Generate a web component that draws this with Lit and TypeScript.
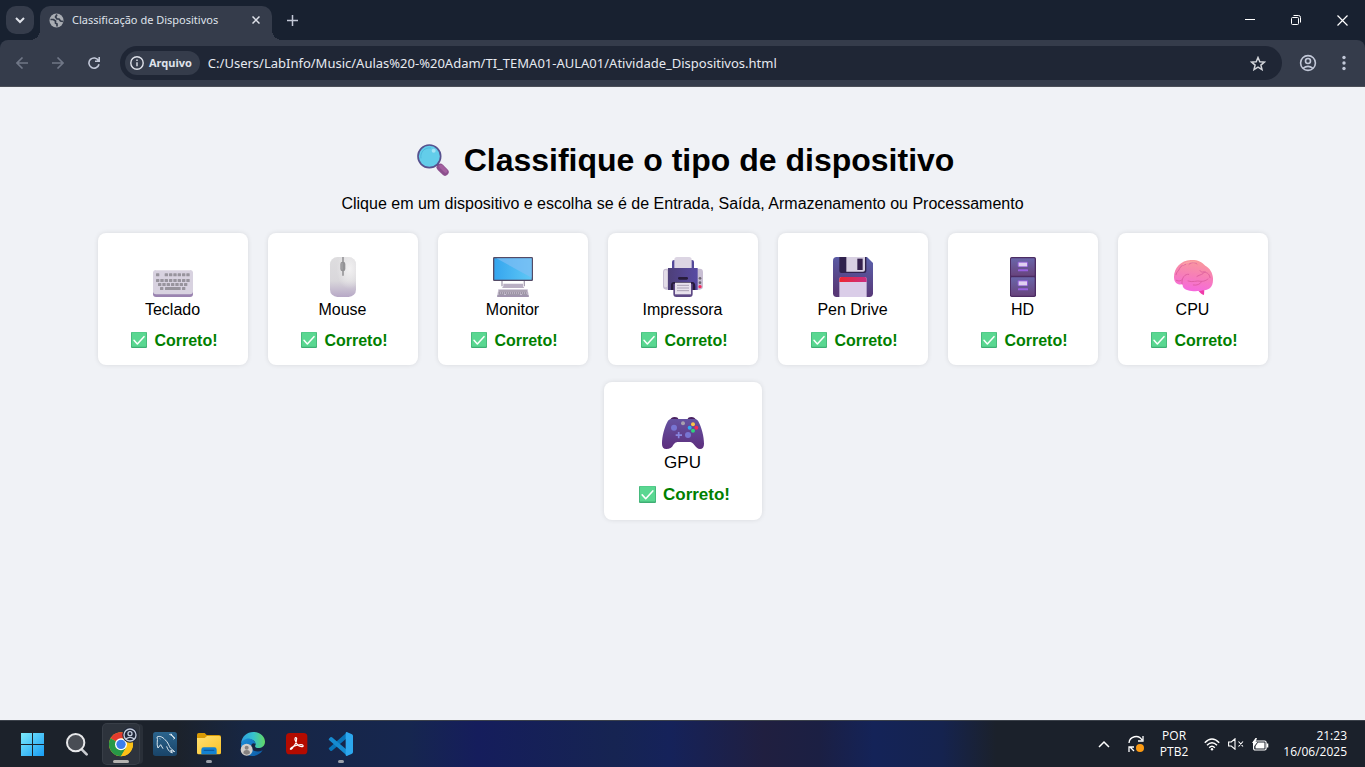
import { LitElement, html, svg, css } from "lit";
import { customElement, property } from "lit/decorators.js";

type Device = { name: string; icon: string; active?: boolean };

const devices: Device[] = [
  { name: "Teclado", icon: "keyboard" },
  { name: "Mouse", icon: "mouse" },
  { name: "Monitor", icon: "monitor" },
  { name: "Impressora", icon: "printer" },
  { name: "Pen Drive", icon: "floppy" },
  { name: "HD", icon: "cabinet" },
  { name: "CPU", icon: "brain" },
  { name: "GPU", icon: "gamepad", active: true },
];

const key = (x: number, y: number, w = 10) =>
  svg`<rect x=${x} y=${y} width=${w} height="9" rx="1.5" fill="#98949d" />`;
const keys = (from: number, count: number, y: number) =>
  Array.from({ length: count }, (_, i) => key(from + i * 13, y));

const drawings: Record<string, unknown> = {
  keyboard: svg`
    <rect x="0" y="44" width="120" height="76" rx="9" fill="#9a83b0" />
    <rect x="0" y="39" width="120" height="73" rx="9" fill="#d8d2e0" />
    <path d="M9 40.500h102" stroke="#e8e4ec" stroke-width="2" />
    ${key(9, 49)}${keys(35, 6, 49)}${keys(9, 8, 66)}${keys(15, 7, 78)}
    ${key(21, 90)}${key(36, 90, 47)}${key(87, 90)}`,
  mouse: svg`
    <defs>
      <linearGradient id="m" x1="0" y1="0" x2="0" y2="1">
        <stop offset="0" stop-color="#dedddf" /><stop offset=".6" stop-color="#d9d7db" />
        <stop offset="1" stop-color="#b7a8c6" />
      </linearGradient>
      <radialGradient id="mh" cx=".75" cy=".3" r=".5">
        <stop offset="0" stop-color="#f2f1f2" /><stop offset="1" stop-color="#f2f1f2" stop-opacity="0" />
      </radialGradient>
    </defs>
    <rect x="21" y="0" width="78" height="120" rx="22" fill="url(#m)" />
    <rect x="21" y="0" width="78" height="120" rx="22" fill="url(#mh)" />
    <path d="M60 0v56" stroke="#98979a" stroke-width="5" />
    <rect x="52" y="14" width="15" height="29" rx="7" fill="#939295" />
    <path d="M57 18v20" stroke="#aaa9ac" stroke-width="3" />`,
  monitor: svg`
    <defs>
      <linearGradient id="s" x1="0" y1="0" x2="1" y2="0">
        <stop offset="0" stop-color="#35a5ee" /><stop offset="1" stop-color="#5fc8f6" />
      </linearGradient>
    </defs>
    <path d="M27 70v18M94 70v18" stroke="#aaa1b3" stroke-width="4" />
    <path d="M31 80h59v8l4 5H27l4-5z" fill="#b9afc3" />
    <rect x="0" y="0" width="120" height="72" rx="4" fill="#544b66" />
    <rect x="4" y="4" width="112" height="64" fill="url(#s)" />
    <path d="M10 4h106v58z" fill="#7fbef4" opacity=".7" />
    <path d="M16 97h88l4 23H12z" fill="#c7bed0" />
    <path d="M13 117h94" stroke="#8f809e" stroke-width="4" />
    <path d="M19 102h82M17 108h86" stroke="#8e8795" stroke-width="4" stroke-dasharray="4 2" />
    <path d="M17 113h16m6 0h42m6 0h16" stroke="#9b93a3" stroke-width="3" />`,
  printer: svg`
    <defs>
      <linearGradient id="p" x1="0" y1="0" x2="1" y2="0">
        <stop offset="0" stop-color="#4d3f78" /><stop offset="1" stop-color="#584aa3" />
      </linearGradient>
    </defs>
    <path d="M27 36V15q0-6 6-6h54q6 0 6 6v21z" fill="#54499a" />
    <path d="M34 38V8q0-8 8-8h36q8 0 8 8v30z" fill="#dcd5e3" />
    <rect x="0" y="35" width="120" height="63" rx="10" fill="#c8bed3" />
    <rect x="3" y="39" width="10" height="52" rx="5" fill="#e3dde8" />
    <path d="M15 33h89v66H15z" fill="url(#p)" />
    <rect x="45" y="60" width="30" height="8" rx="4" fill="#281c3c" />
    <path d="M24 84q0-9 9-9h55q9 0 9 14v10H24z" fill="#261a3c" />
    <path d="M31 80h58v31q0 9-9 9H40q-9 0-9-9z" fill="#5e4985" />
    <path d="M36 77h48v35H36z" fill="#e8e2ed" />
    <path d="M42 85h36M42 93h36M42 101h36" stroke="#aaa1b5" stroke-width="3" />
    <circle cx="111" cy="64" r="4" fill="#6d6571" /><circle cx="111" cy="77" r="4" fill="#6d6571" />
    <circle cx="111" cy="89" r="5" fill="#f52b5e" />`,
  floppy: svg`
    <defs>
      <linearGradient id="f" x1="1" y1="0" x2=".8" y2="1">
        <stop offset="0" stop-color="#5b62ad" /><stop offset="1" stop-color="#573776" />
      </linearGradient>
      <linearGradient id="fr"><stop offset="0" stop-color="#ee2630" /><stop offset="1" stop-color="#c93083" /></linearGradient>
    </defs>
    <path d="M11 0h91l18 18v91q0 11-11 11H11q-11 0-11-11V11Q0 0 11 0z" fill="url(#f)" />
    <path d="M19 0h81v42q0 6-6 6H25q-6 0-6-6z" fill="#30224d" />
    <path d="M40 0h56v38q0 6-6 6H40z" fill="#d8d0e2" />
    <rect x="73" y="5" width="16" height="34" fill="#35214e" />
    <path d="M19 66q0-6 6-6h70q6 0 6 6v54H19z" fill="#dacde8" />
    <path d="M19 75v-9q0-6 6-6h70q6 0 6 6v9z" fill="url(#fr)" />`,
  cabinet: svg`
    <defs>
      <linearGradient id="c" x1="0" y1="0" x2="0" y2="1">
        <stop offset="0" stop-color="#6a66a9" /><stop offset="1" stop-color="#68447d" />
      </linearGradient>
    </defs>
    <rect x="21" y="0" width="78" height="120" rx="5" fill="#4c2c63" />
    <rect x="24" y="4" width="71" height="52" rx="2" fill="url(#c)" />
    <rect x="24" y="61" width="71" height="55" rx="2" fill="url(#c)" />
    <rect x="44" y="14" width="31" height="16" rx="3" fill="#9260d7" />
    <rect x="47" y="17" width="25" height="11" fill="#e0d0f0" />
    <rect x="45" y="37" width="30" height="6" rx="1" fill="#9861e0" />
    <rect x="44" y="70" width="31" height="17" rx="3" fill="#9260d7" />
    <rect x="47" y="73" width="25" height="12" fill="#e0d0f0" />
    <rect x="45" y="94" width="30" height="6" rx="1" fill="#9861e0" />`,
  brain: svg`
    <defs>
      <linearGradient id="b" x1=".6" y1="0" x2=".4" y2="1">
        <stop offset="0" stop-color="#f99a9b" /><stop offset=".5" stop-color="#f77fb7" />
        <stop offset="1" stop-color="#f668df" />
      </linearGradient>
    </defs>
    <path d="M74 98q12-3 20 2l-1 14q-9-2-19-16z" fill="#f03ba9" />
    <path d="M3 62C2 34 23 10 53 9c20-1 33 5 44 17 15 8 24 25 23 43 0 22-13 31-31 31-15 5-52 4-59-10-1-3 0-6-3-8C13 84 4 77 3 62z" fill="url(#b)" />
    <g fill="none" stroke="#d9579b" stroke-width="3" stroke-linecap="round" opacity=".75">
      <path d="M9 53c2-10 8-10 11-19s14-10 18-12M48 22c8-9 21-5 24-1M72 58c10-6 17-4 24-14M93 45c13 2 17 9 18 17M81 41c4 7 11 4 11 4" />
      <path d="M27 81c-2-19 9-31 20-29M45 72c13 6 26-3 39 1 12 1 21-7 21-7M61 84c11 2 20-2 25-10M10 70c8 4 14 2 18-3" />
    </g>
    <path d="M29 24c12-11 27-9 39-9" fill="none" stroke="#fcb3ad" stroke-width="3" opacity=".7" />`,
  gamepad: svg`
    <defs>
      <linearGradient id="g" x1="0" y1="0" x2="0" y2="1">
        <stop offset="0" stop-color="#6553a1" /><stop offset="1" stop-color="#5d2e7d" />
      </linearGradient>
    </defs>
    <path d="M23 42q3-12 15-12 10 0 11 6h28q1-6 11-6 12 0 15 12z" fill="#492060" />
    <path d="M18 41q3-5 11-5h68q8 0 11 5c11 20 18 46 18 70 0 9-4 15-12 15-7 0-12-5-17-12-5-8-10-9-17-9H46q-7 0-12 8-6 13-21 13-13 0-13-15C0 87 7 61 18 41z" fill="url(#g)" />
    <circle cx="36" cy="62" r="9" fill="#7775d2" /><circle cx="78" cy="84" r="9" fill="#7775d2" />
    <path d="M50 75v19M41 84.500h19" stroke="#8785df" stroke-width="5" />
    <circle cx="63" cy="49" r="6" fill="#a89fae" />
    <circle cx="93" cy="52" r="6" fill="#fac348" /><circle cx="83" cy="62" r="6" fill="#2fa9f5" />
    <circle cx="103" cy="62" r="6" fill="#f42b55" /><circle cx="93" cy="71" r="6" fill="#2ed27d" />`,
};

const check = svg`
  <rect width="48" height="48" rx="3" fill="#3fae74" />
  <rect x="2" y="1" width="44" height="43" rx="2" fill="#5ad791" />
  <path d="M9 25l10 11 20-22" fill="none" stroke="#fff" stroke-width="4.500" stroke-linecap="round" stroke-linejoin="round" />`;

@customElement("device-card")
export class DeviceCard extends LitElement {
  @property() name = "";
  @property() icon = "";
  @property({ type: Boolean, reflect: true }) active = false;

  static styles = css`
    :host { display: block; width: 150px; }
    :host([active]) { width: 158px; margin: -3px -4px; }
    .card {
      display: flex; flex-direction: column; align-items: center;
      width: 100%; box-sizing: border-box; padding: 24px 16px 14px;
      border: 0; border-radius: 8px; background: #fff; color: #000;
      box-shadow: 0 0 5px rgba(0, 0, 0, 0.1);
      font: 16px/20px "Liberation Sans", Arial, sans-serif; cursor: pointer;
    }
    .icon { width: 40px; height: 40px; margin-bottom: 3px; }
    .result { display: flex; align-items: center; gap: 7px; margin-top: 11px; padding-left: 4px; color: green; font-weight: bold; }
    .check { width: 16px; height: 16px; margin-bottom: 2px; }
    .active { padding: 25px 16px 15px; font-size: 17px; }
    .active .icon { width: 42px; height: 42px; margin-bottom: 4px; }
    .active .result { margin-top: 12px; }
    .active .check { width: 17px; height: 17px; }
  `;

  render() {
    return html`<button class="card ${this.active ? "active" : ""}">
      <svg class="icon" viewBox=${this.active ? "0 0 126 126" : "0 0 120 120"} aria-hidden="true">${drawings[this.icon]}</svg>
      <span>${this.name}</span>
      <span class="result"><svg class="check" viewBox="0 0 48 48" aria-hidden="true">${check}</svg>Correto!</span>
    </button>`;
  }
}

@customElement("browser-chrome")
export class BrowserChrome extends LitElement {
  static styles = css`
    :host { display: block; background: #182130; color: #dfe2ea; font: 12px/16px "Noto Sans", "Open Sans", sans-serif; }
    button { display: grid; place-items: center; border: 0; padding: 0; background: none; color: inherit; font: inherit; }
    svg { display: block; fill: none; stroke: currentColor; }
    .tabs { display: flex; align-items: flex-end; height: 40px; padding-left: 6px; }
    .list { width: 28px; height: 28px; margin: 0 6px 6px 0; border-radius: 10px; background: #353c4b; }
    .tab {
      position: relative; display: flex; align-items: center; gap: 8px; box-sizing: border-box;
      width: 232px; height: 34px; padding: 0 8px 6px 9px; border-radius: 10px 10px 0 0; background: #353c4b;
    }
    .tab::before, .tab::after { content: ""; position: absolute; bottom: 0; width: 10px; height: 10px; }
    .tab::before { right: 100%; background: radial-gradient(circle at 0 0, transparent 10px, #353c4b 10px); }
    .tab::after { left: 100%; background: radial-gradient(circle at 100% 0, transparent 10px, #353c4b 10px); }
    .title { flex: 1; font-size: 11px; white-space: nowrap; }
    .close { width: 16px; height: 16px; }
    .new { width: 28px; height: 28px; margin: 0 auto 6px 6px; color: #c2c8d6; }
    .window { width: 46px; height: 40px; color: #fff; }
    .toolbar {
      display: flex; align-items: center; box-sizing: border-box; height: 47px; padding: 0 3px 0 4px;
      border-bottom: 1px solid #4b4f58; border-radius: 8px 8px 0 0; background: #353c4b;
    }
    .tool { width: 36px; height: 34px; color: #c2c8d8; }
    .muted { color: #707787; }
    .address {
      flex: 1; display: flex; align-items: center; height: 34px; margin: 0 8px; padding-left: 5px; box-sizing: border-box;
      border-radius: 17px; background: #1f2635;
    }
    .chip { display: flex; align-items: center; gap: 5px; height: 24px; padding: 0 8px 0 5px; border-radius: 12px; background: #353c4b; font-size: 11px; font-weight: 700; }
    .url { flex: 1; min-width: 0; padding: 0 8px; border: 0; outline: 0; background: none; color: #e6e9f0; font: 13px/20px "Noto Sans", "Open Sans", sans-serif; }
    .star { width: 34px; height: 34px; margin-right: 7px; color: #d3d5da; }
  `;

  render() {
    return html`
      <div class="tabs">
        <button class="list" aria-label="Pesquisar guias"><svg width="10" height="8" stroke-width="2" viewBox="0 0 10 8"><path d="M1 2l4 4 4-4" /></svg></button>
        <div class="tab">
          <svg width="15" height="15" viewBox="0 0 15 15"><circle cx="7.500" cy="7.500" r="7" fill="#a9adb3" stroke="none" /><path d="M1.500 6.500h3l2 1.500v2l1.500 1v2.500M8 1.500L6.500 4l1.500 2h2l1.500 2 2.500.5" stroke="#353c4b" stroke-width="1.700" /></svg>
          <span class="title">Classificação de Dispositivos</span>
          <button class="close" aria-label="Fechar guia"><svg width="8" height="8" viewBox="0 0 8 8" stroke-width="1.500"><path d="M.5.5l7 7M7.500.5l-7 7" /></svg></button>
        </div>
        <button class="new" aria-label="Nova guia"><svg width="11" height="11" viewBox="0 0 11 11" stroke-width="1.500"><path d="M5.500 0v11M0 5.500h11" /></svg></button>
        <button class="window" aria-label="Minimizar"><svg width="10" height="10" viewBox="0 0 10 10"><path d="M0 4.500h10" /></svg></button>
        <button class="window" aria-label="Restaurar"><svg width="10" height="10" viewBox="0 0 10 10"><rect x=".5" y="2.500" width="7" height="7" rx="1" /><path d="M2.500.5h5q2 0 2 2v5" /></svg></button>
        <button class="window" aria-label="Fechar"><svg width="11" height="11" viewBox="0 0 11 11" stroke-width="1.200"><path d="M.5.5l10 10M10.500.5l-10 10" /></svg></button>
      </div>
      <div class="toolbar">
        <button class="tool muted" aria-label="Voltar"><svg width="12" height="12" viewBox="0 0 12 12" stroke-width="1.600"><path d="M12 6H1M6.500.5L1 6l5.500 5.500" /></svg></button>
        <button class="tool muted" aria-label="Avançar"><svg width="12" height="12" viewBox="0 0 12 12" stroke-width="1.600"><path d="M0 6h11M5.500.5L11 6l-5.500 5.500" /></svg></button>
        <button class="tool" aria-label="Recarregar"><svg width="12" height="12" viewBox="0 0 12 12" stroke-width="1.600"><path d="M11 7.200A5.100 5.100 0 1 1 10.500 3.600M11.200 0v4.200H7" /></svg></button>
        <div class="address">
          <button class="chip"><svg width="14" height="14" viewBox="0 0 14 14" stroke-width="1.400"><circle cx="7" cy="7" r="6.200" /><path d="M7 6.200v4M7 3.500v1.500" /></svg>Arquivo</button>
          <input class="url" aria-label="Endereço" value="C:/Users/LabInfo/Music/Aulas%20-%20Adam/TI_TEMA01-AULA01/Atividade_Dispositivos.html" />
          <button class="star" aria-label="Favoritar"><svg width="16" height="15" viewBox="0 0 16 15" stroke-width="1.500"><path d="M8 1.500l1.800 4.200 4.600.4-3.500 3 1.100 4.500L8 11.200l-4 2.400 1.100-4.500-3.500-3 4.600-.4z" /></svg></button>
        </div>
        <button class="tool" aria-label="Perfil"><svg width="18" height="18" viewBox="0 0 18 18" stroke-width="1.600"><circle cx="9" cy="9" r="7.400" /><circle cx="9" cy="7" r="2.500" /><path d="M4 14.300q5-3.800 10 0" /></svg></button>
        <button class="tool" aria-label="Menu"><svg width="4" height="16" viewBox="0 0 4 16"><g fill="currentColor" stroke="none"><circle cx="2" cy="2.500" r="1.700" /><circle cx="2" cy="8" r="1.700" /><circle cx="2" cy="13.500" r="1.700" /></g></svg></button>
      </div>`;
  }
}

const apps = [
  { name: "Iniciar", state: "", art: svg`
    <defs><linearGradient id="w" x1="0" y1="0" x2="72" y2="72" gradientUnits="userSpaceOnUse"><stop offset="0" stop-color="#7eebfb" /><stop offset="1" stop-color="#159bf5" /></linearGradient></defs>
    <path d="M0 3h33v33H0zM36 3h33v33H36zM0 39h33v33H0zM36 39h33v33H36z" fill="url(#w)" />` },
  { name: "Pesquisar", state: "", art: svg`
    <path d="M50 52l15 15" stroke="#c9ccd0" stroke-width="8" stroke-linecap="round" />
    <circle cx="32" cy="32" r="26" fill="#494d54" stroke="#e7e8ea" stroke-width="6" />` },
  { name: "Google Chrome", state: "current", art: svg`
    <circle cx="36" cy="37" r="36" fill="#fbc116" />
    <path d="M36 37L4.800 19A36 36 0 0 1 67.200 19z" fill="#e33b2e" />
    <path d="M36 37L4.800 19A36 36 0 0 0 36 73l16-27z" fill="#279847" />
    <path d="M36 19h31.200A36 36 0 0 1 36 73l16-27z" fill="#fbc116" />
    <circle cx="36" cy="37" r="18" fill="#fff" /><circle cx="36" cy="37" r="14" fill="#3b7ded" />
    <circle cx="63" cy="9" r="23" fill="#20283a" />
    <g fill="none" stroke="#c5cede" stroke-width="4"><circle cx="63" cy="9" r="18" /><circle cx="63" cy="5" r="6" /><path d="M50 21q13-10 26 0" /></g>` },
  { name: "MySQL Workbench", state: "", art: svg`
    <defs><linearGradient id="q" x1="0" y1="0" x2="0" y2="1"><stop offset="0" stop-color="#2b648d" /><stop offset="1" stop-color="#194468" /></linearGradient></defs>
    <rect width="72" height="72" rx="8" fill="url(#q)" />
    <path d="M15 48C9 35 16 25 12 15c7-4 16-1 24 8 10 8 12 20 16 25l13 11-12-4 5 8c-11-4-15-13-17-20M15 48l8-10 7 12M20 20l2 1" fill="none" stroke="#d9e5ed" stroke-width="3" stroke-linejoin="round" />
    <path d="M49 7l8 3 8 8-3 4M54 5l5 9 6 5" fill="none" stroke="#e8f0f5" stroke-width="3" />` },
  { name: "Explorador de Arquivos", state: "open", art: svg`
    <defs><linearGradient id="e" x1="0" y1="0" x2="1" y2="1"><stop offset="0" stop-color="#ffe073" /><stop offset="1" stop-color="#fbc226" /></linearGradient></defs>
    <path d="M0 8q0-5 5-5h18l6 6h37q6 0 6 6v8H0z" fill="#d99a04" />
    <path d="M0 18h23l7-6h37q5 0 5 5v45q0 5-5 5H5q-5 0-5-5z" fill="url(#e)" />
    <path d="M13 67V53q0-7 7-7h32q7 0 7 7v14z" fill="#1382d2" /><path d="M22 55h28" stroke="#0b5aa0" stroke-width="4" stroke-linecap="round" />` },
  { name: "Microsoft Edge", state: "", art: svg`
    <defs>
      <linearGradient id="eg"><stop offset="0" stop-color="#2e9dde" /><stop offset=".5" stop-color="#35c1cf" /><stop offset="1" stop-color="#62d864" /></linearGradient>
      <linearGradient id="eb" x1="0" y1="0" x2="1" y2="1"><stop offset="0" stop-color="#1a8fdb" /><stop offset="1" stop-color="#0c59a4" /></linearGradient>
    </defs>
    <path d="M0 34C3 12 18 0 37 0c22 0 35 15 35 29 0 13-10 19-20 19-9 0-12-4-8-10C43 20 19 17 0 34z" fill="url(#eg)" />
    <path d="M0 38C2 25 15 18 27 20c10 2 17 9 16 17-4-6-12-3-13 6-1 12 17 21 35 12C58 66 46 72 34 72 15 72-1 57 0 38z" fill="url(#eb)" />
    <circle cx="17" cy="53" r="18" fill="#d0cdca" /><circle cx="17" cy="47" r="6" fill="#85817f" /><path d="M7 64q0-10 10-10t10 10q-10 8-20 0z" fill="#85817f" />` },
  { name: "Adobe Acrobat", state: "", art: svg`
    <rect x="3" y="3" width="64" height="64" rx="11" fill="#b30b00" />
    <path d="M18 48c8-1 17-14 17-29-4-5-7 0-4 7 4 12 11 19 21 18 5-1 2-6-4-6-13 0-32 8-32 13 0 2 4 1 8-5" fill="none" stroke="#fff" stroke-width="3.500" />` },
  { name: "Visual Studio Code", state: "open", art: svg`
    <path d="M55 0v17L9 56q-3 2-5 0l-4-4q-2-2 0-4z" fill="#0874b9" />
    <path d="M0 24q-2-2 0-4l4-4q2-2 5 0l46 39v17z" fill="#168bd0" />
    <path d="M53 0l16 7q3 2 3 5v48q0 3-3 5l-16 7q-3 0-3-4V4q0-4 3-4z" fill="#2ca7ee" />` },
];

@customElement("task-bar")
export class TaskBar extends LitElement {
  static styles = css`
    :host {
      display: flex; align-items: stretch; justify-content: space-between; box-sizing: border-box; height: 47px;
      padding: 0 18px 0 11px; border-top: 1px solid #3c424b; color: #fff; font: 12px/16px "Open Sans", "Noto Sans", sans-serif;
      background: linear-gradient(90deg, #1c222b 13%, #172643 18%, #16264f 30%, #151d5c 35%, #162452 45%, #15225a 49%, #201f40 56%, #1b1f43 60%, #142358 64%, #15234f 69%, #1b212b 73%);
    }
    button { border: 0; padding: 0; background: none; color: inherit; font: inherit; }
    .apps, .tray { display: flex; align-items: center; }
    .app { display: flex; flex-direction: column; align-items: center; justify-content: flex-end; width: 36px; height: 40px; margin: 0 4px; border-radius: 4px; }
    .app svg { display: block; width: 24px; height: 24px; overflow: visible; }
    .mark { width: 6px; height: 3px; margin: 4px 0 1px; border-radius: 2px; }
    .open .mark { background: #9aa0aa; }
    .current { background: #2d333c; box-shadow: 0 0 0 1px #383e47, 4px 0 0 #292f38; }
    .current .mark { width: 16px; background: #b5b3b0; }
    .tray svg { display: block; fill: none; stroke: #fff; }
    .chevron { margin-right: 18px; }
    .sync, .lang { margin-right: 16px; }
    .lang { text-align: center; }
    .status { display: flex; align-items: center; gap: 8px; margin-right: 14px; }
    .clock { text-align: right; }
  `;

  render() {
    return html`
      <div class="apps">${apps.map((a) => html`<button class="app ${a.state}" aria-label=${a.name}>
        <svg viewBox="0 0 72 72">${a.art}</svg><span class="mark"></span></button>`)}</div>
      <div class="tray">
        <button class="chevron" aria-label="Mostrar ícones ocultos"><svg width="12" height="8" viewBox="0 0 12 8" stroke-width="1.500"><path d="M1 7l5-5 5 5" /></svg></button>
        <button class="sync" aria-label="Atualização"><svg width="16" height="18" viewBox="0 0 16 18" stroke-width="1.300"><path d="M1 8a7 7 0 0 1 13-3M15 1v5h-5M1 17v-5h5M2 12l4 4" /><circle cx="12" cy="13" r="4" fill="#fb9a12" stroke="none" /></svg></button>
        <button class="lang">POR<br />PTB2</button>
        <button class="status" aria-label="Rede, som e bateria">
          <svg width="16" height="13" viewBox="0 0 16 13" stroke-width="1.500"><path d="M.8 4.800q7.200-7.400 14.400 0M3 7.300q5-5 10 0M5.200 9.700q2.800-2.800 5.600 0" /><circle cx="8" cy="11.300" r="1.200" fill="#fff" stroke="none" /></svg>
          <svg width="16" height="12" viewBox="0 0 16 12" stroke-width="1.100"><path d="M.6 4h2.700L7 .8v10.400L3.300 8H.6zM10.500 3.500l4.500 5M15 3.500l-4.500 5" /></svg>
          <svg width="17" height="13" viewBox="0 0 17 13"><rect x="1.600" y="3" width="12.500" height="9" rx="1.500" stroke-width="1.200" /><path d="M6 4.500h6.500v6H3.500V8z" fill="#fff" stroke="none" /><path d="M15.500 5.500v4" stroke-width="1.600" /><path d="M3.500 0L0 5h2L1.500 9 5.500 4H3.500L5 0z" fill="#fff" stroke="none" /></svg>
        </button>
        <div class="clock">21:23<br />16/06/2025</div>
      </div>`;
  }
}

@customElement("app-root")
export class AppRoot extends LitElement {
  static styles = css`
    :host { display: flex; flex-direction: column; min-height: 100vh; background: #f0f2f6; color: #000; font: 16px/18px "Liberation Sans", Arial, sans-serif; }
    .page { flex: 1; padding: 55px 40px 40px; text-align: center; }
    .heading { display: flex; justify-content: center; align-items: center; margin: 0; font-size: 32px; line-height: 36px; }
    .lens { width: 32px; height: 32px; margin: 0 15px 0 6px; }
    .intro { margin: 17px 0 20px; }
    .devices { display: flex; flex-wrap: wrap; justify-content: center; gap: 20px; }
  `;

  render() {
    return html`
      <browser-chrome></browser-chrome>
      <main class="page">
        <h1 class="heading">
          <svg class="lens" viewBox="0 0 96 96" aria-hidden="true">
            <path d="M60 60l8 8" stroke="#55427c" stroke-width="8" />
            <path d="M70 70l14 14" stroke="#8c4f8d" stroke-width="22" stroke-linecap="round" />
            <path d="M72 67l14 14" stroke="#a3609f" stroke-width="11" stroke-linecap="round" />
            <circle cx="37" cy="37" r="34" fill="#63cdea" stroke="#57528f" stroke-width="5" />
            <path d="M12 43a26 26 0 0 1 30-31" fill="none" stroke="#4fb9dc" stroke-width="3" />
            <circle cx="50" cy="20" r="6" fill="#a5e3f5" />
          </svg>
          Classifique o tipo de dispositivo
        </h1>
        <p class="intro">Clique em um dispositivo e escolha se é de Entrada, Saída, Armazenamento ou Processamento</p>
        <div class="devices">
          ${devices.map((d) => html`<device-card name=${d.name} icon=${d.icon} ?active=${d.active}></device-card>`)}
        </div>
      </main>
      <task-bar></task-bar>`;
  }
}
